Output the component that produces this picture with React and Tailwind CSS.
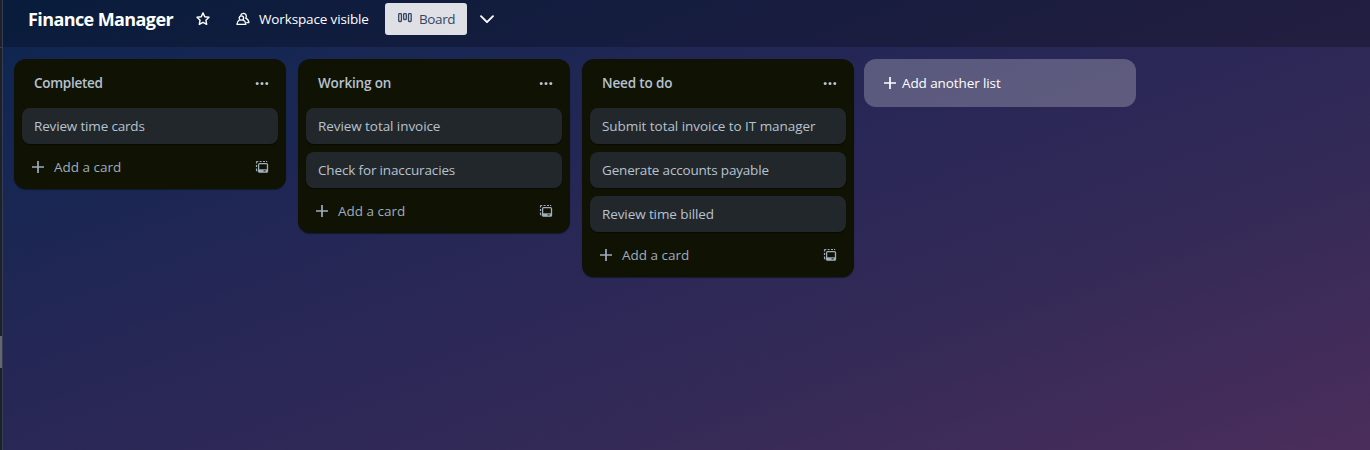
const FONT = "font-['Open_Sans','Noto_Sans',sans-serif]";

const lists = [
  { title: 'Completed', tt: 'tracking-[-0.29px]', cards: [['Review time cards', 'tracking-[-0.17px]']] },
  {
    title: 'Working on',
    tt: 'tracking-[-0.15px]',
    cards: [['Review total invoice', 'tracking-[-0.07px]'], ['Check for inaccuracies', 'tracking-[-0.15px]']],
  },
  {
    title: 'Need to do',
    tt: 'tracking-[-0.15px]',
    cards: [
      ['Submit total invoice to IT manager', 'tracking-[-0.05px]'],
      ['Generate accounts payable', 'tracking-[-0.18px]'],
      ['Review time billed', 'tracking-[-0.1px]'],
    ],
  },
];

function Plus({ className }) {
  return (
    <svg viewBox="0 0 16 16" className={className} fill="none" stroke="currentColor" strokeWidth="1.7">
      <path d="M8 2v12M2 8h12" />
    </svg>
  );
}

function Dots() {
  return (
    <svg viewBox="0 0 16 16" className="size-4" fill="currentColor">
      <circle cx="3.2" cy="7.5" r="1.5" />
      <circle cx="8" cy="7.5" r="1.5" />
      <circle cx="12.8" cy="7.5" r="1.5" />
    </svg>
  );
}

function Template() {
  return (
    <svg viewBox="0 0 16 16" className="size-4" fill="none" stroke="currentColor">
      <path d="M2.5 4.6V3.4q0-.9.9-.9h.9M5.6 2.5h2M9 2.5h2M12 2.5h1.2M2.5 6v2M2.5 9.4v1.6q0 .9.9.9" strokeWidth="1.2" />
      <rect x="4.6" y="4.6" width="8.9" height="8.6" rx="1" strokeWidth="1.3" />
      <path d="M4.6 10.3h8.9v2.9H4.6z" fill="currentColor" stroke="none" />
      <path d="M9.5 11.9h2.2" stroke="#101204" strokeWidth="1" />
    </svg>
  );
}

function List({ list }) {
  return (
    <section className="flex w-[272px] shrink-0 flex-col rounded-xl bg-[#101204] px-2 pb-1 text-[#9fadbc] shadow-[0_1px_1px_#091824cc]">
      <header className="flex h-[49px] items-center justify-between pr-2 pl-3 text-[#b6c2cf]">
        <h2 className={`text-[13.5px] font-[650] ${list.tt}`}>{list.title}</h2>
        <Dots />
      </header>
      <div className="flex flex-col gap-2">
        {list.cards.map(([text, t]) => (
          <div key={text} className="flex h-9 items-center rounded-lg bg-[#22272b] px-3 text-[#b6c2cf] shadow-[0_1px_1px_#03040480]">
            <span className={`text-[13.5px] whitespace-nowrap ${t}`}>{text}</span>
          </div>
        ))}
      </div>
      <footer className="flex h-[41px] items-center justify-between px-2 pt-[5px]">
        <span className="flex items-center gap-2">
          <Plus className="size-4" />
          <span className="text-[13.5px]">Add a card</span>
        </span>
        <Template />
      </footer>
    </section>
  );
}

export default function App() {
  return (
    <div className={`flex h-[450px] w-[1370px] overflow-hidden ${FONT}`}>
      <div className="flex w-[3px] shrink-0 flex-col border-r border-[#343d59] bg-[#1d2125]">
        <div className="h-[48px] border-b border-[#3a4045]" />
        <div className="mt-[288px] h-8 bg-[#65676a]" />
      </div>
      <main className="flex min-w-0 flex-1 flex-col bg-[linear-gradient(160deg,#0c2650_0%,#282756_45%,#342a57_70%,#4b2d5b_100%)]">
        <header className="flex h-[47px] shrink-0 items-start bg-[#00000040] pt-[3px] pl-[25px] text-white">
          <div className="flex h-8 items-center">
            <h1 className="w-[167px] text-[18px] font-bold tracking-[-0.6px] whitespace-nowrap">Finance Manager</h1>
            <svg viewBox="0 0 16 16" className="size-4" fill="none" stroke="currentColor" strokeWidth="1.4" strokeLinejoin="round">
              <path d="M8 1.9l1.75 3.9 4.25.5-3.1 2.9.8 4.2L8 11.3l-3.7 2.1.8-4.2L2 6.3l4.25-.5z" />
            </svg>
            <svg viewBox="0 0 16 16" className="ml-6 size-4" fill="none" stroke="currentColor" strokeWidth="1.3" strokeLinejoin="round">
              <circle cx="6.4" cy="7" r="2.2" />
              <path d="M4.6 8.9c-1.6.9-2.6 2.3-2.7 4.5h8.9c-.1-2.2-1-3.6-2.6-4.5" />
              <path d="M5.4 4.6c.5-1.5 1.7-2.3 3-2.3 1.8 0 3 1.4 2.9 3.1 0 .7-.2 1.3-.6 1.8 1.9.8 3 2.2 3.2 4.4h-2.6" />
            </svg>
            <span className="ml-2 w-[110px] text-[13.5px] font-medium tracking-[-0.14px] whitespace-nowrap">Workspace visible</span>
            <div className="ml-4 flex h-8 w-[82px] items-center rounded-[3px] bg-[#dfe0e6] pl-3 text-[#344563]">
              <svg viewBox="0 0 16 16" className="size-4" fill="none" stroke="currentColor" strokeWidth="1.3">
                <rect x="1.7" y="2.7" width="2.7" height="7.8" rx=".8" />
                <rect x="6.6" y="2.7" width="2.7" height="5.8" rx=".8" />
                <rect x="11.5" y="2.7" width="2.7" height="7.8" rx=".8" />
              </svg>
              <span className="ml-1.5 text-[13.5px] tracking-[-0.4px]">Board</span>
            </div>
            <svg viewBox="0 0 16 16" className="ml-3 size-4" fill="none" stroke="currentColor" strokeWidth="1.9" strokeLinecap="round" strokeLinejoin="round">
              <path d="M2 5.2l6 6 6-6" />
            </svg>
          </div>
        </header>
        <div className="flex items-start pt-3 pl-[11px]">
          <div className="flex items-start gap-3">
            {lists.map((l) => (
              <List key={l.title} list={l} />
            ))}
          </div>
          <div className="ml-[10px] flex h-12 w-[272px] items-center rounded-xl bg-[#ffffff3d] pl-[18px] text-white">
            <Plus className="size-4" />
            <span className="ml-1 text-[13.5px] font-medium tracking-[-0.1px]">Add another list</span>
          </div>
        </div>
      </main>
    </div>
  );
}
